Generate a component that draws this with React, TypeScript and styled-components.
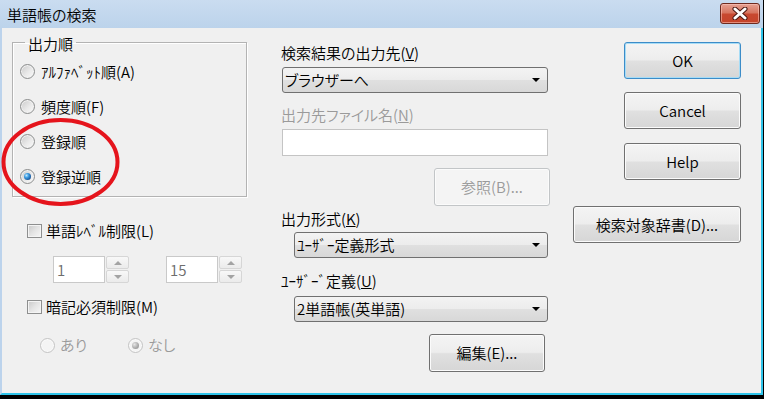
import React from "react";
import styled, { createGlobalStyle } from "styled-components";

const Global = createGlobalStyle`
  html, body { margin: 0; padding: 0; background: #000; }
  body {
    font-family: "Noto Sans CJK JP DemiLight", "Noto Sans CJK JP", "Noto Sans", sans-serif;
    font-weight: 300;
    font-size: 15px;
    font-feature-settings: "palt";
    color: #000;
  }
  * { box-sizing: border-box; }
`;

const Screen = styled.div`
  position: relative;
  width: 764px;
  height: 399px;
  background: #000;
  overflow: hidden;
`;

const Window = styled.div`
  width: 763px;
  height: 395px;
  display: flex;
  flex-direction: column;
`;

const TitleBar = styled.div`
  height: 28px;
  flex: none;
  display: flex;
  align-items: flex-start;
  justify-content: space-between;
  padding: 0 3px 0 7px;
  background: linear-gradient(#cadcf0, #bcd3eb);
`;

const Title = styled.div`
  margin-top: 5px;
  line-height: 20px;
`;

const CloseButton = styled.div`
  margin-top: 3px;
  width: 40px;
  height: 21px;
  border: 1px solid #6e2a1f;
  border-radius: 3px;
  background: linear-gradient(#e6a193 0%, #d77660 45%, #c8482f 55%, #c4442b 100%);
  box-shadow: inset 0 0 0 1px rgba(255, 200, 190, 0.55);
  display: flex;
  align-items: center;
  justify-content: center;
`;

const Body = styled.div`
  flex: 1;
  display: flex;
  background: #f0f0f0;
  border-left: 2px solid #bcd3ec;
  border-right: 2px solid #2fc4ea;
  border-bottom: 2px solid #2fc4ea;
  padding: 4px 0 0 10px;
`;

const LeftCol = styled.div`
  width: 235px;
  display: flex;
  flex-direction: column;
`;

const MiddleCol = styled.div`
  width: 269px;
  margin-left: 34px;
  display: flex;
  flex-direction: column;
`;

const RightCol = styled.div`
  width: 168px;
  margin-left: 23px;
  display: flex;
  flex-direction: column;
`;

const Group = styled.fieldset`
  margin: 0;
  padding: 2px 0 2px 7px;
  border: 1px solid #b3b3b3;
  box-shadow: 1px 1px 0 #fff, inset 1px 1px 0 #fff;
  min-inline-size: 0;
  width: 235px;
`;

const Legend = styled.legend`
  margin-left: 5px;
  padding: 4px 3px 0;
  line-height: 16px;
`;

const RadioRow = styled.div<{ $h?: number }>`
  display: flex;
  align-items: center;
  height: ${(p) => p.$h ?? 35}px;
  gap: 6px;
  line-height: 20px;
`;

const RadioCircle = styled.span<{ $checked?: boolean; $disabled?: boolean }>`
  position: relative;
  flex: none;
  width: 15px;
  height: 15px;
  border-radius: 50%;
  border: 1px solid ${(p) => (p.$disabled ? "#c4c4c4" : "#8c8e8e")};
  background: ${(p) =>
    p.$disabled
      ? "#f4f4f4"
      : "linear-gradient(135deg, #c9c9c9 0%, #e9e9e9 55%, #fbfbfb 100%)"};
  box-shadow: inset 0 0 0 1px ${(p) => (p.$disabled ? "#fafafa" : "#f2f2f2")};
  &::after {
    content: "";
    display: ${(p) => (p.$checked ? "block" : "none")};
    position: absolute;
    left: 3px;
    top: 3px;
    width: 7px;
    height: 7px;
    border-radius: 50%;
    background: ${(p) =>
      p.$disabled
        ? "radial-gradient(circle at 35% 35%, #e6e6e6 0%, #a8a8a8 60%, #8a8a8a 100%)"
        : "radial-gradient(circle at 35% 35%, #bfe8ff 0%, #3c9be0 35%, #124a8f 80%, #0a2f63 100%)"};
  }
`;

const Text = styled.span<{ $disabled?: boolean }>`
  color: ${(p) => (p.$disabled ? "#9a9a9a" : "#000")};
  white-space: nowrap;
`;

const U = styled.span`
  text-decoration: underline;
`;

const CheckRow = styled.div<{ $mt: number }>`
  display: flex;
  align-items: center;
  height: 20px;
  margin-top: ${(p) => p.$mt}px;
  padding-left: 15px;
  gap: 4px;
  line-height: 20px;
`;

const CheckBox = styled.span`
  flex: none;
  width: 15px;
  height: 14px;
  border: 1px solid #8e8f8f;
  background: linear-gradient(135deg, #c8c8c8 0%, #e4e4e4 50%, #f6f6f6 100%);
  box-shadow: inset 0 0 0 1px #f4f4f4;
`;

const SpinRow = styled.div`
  display: flex;
  margin-top: 15px;
  padding-left: 41px;
`;

const SpinGroup = styled.div<{ $ml?: number }>`
  display: flex;
  gap: 1px;
  margin-left: ${(p) => p.$ml ?? 0}px;
`;

const SpinInput = styled.div`
  width: 52px;
  height: 27px;
  border: 1px solid #c9c9c9;
  background: #fff;
  color: #6d6d6d;
  padding-left: 3px;
  line-height: 25px;
`;

const SpinButtons = styled.div`
  width: 23px;
  display: flex;
  flex-direction: column;
  gap: 1px;
`;

const SpinBtn = styled.div`
  height: 13px;
  border: 1px solid #d6d6d6;
  border-radius: 2px;
  background: linear-gradient(#f8f8f8, #ebebeb);
  display: flex;
  align-items: center;
  justify-content: center;
`;

const Tri = styled.span<{ $dir: "up" | "down"; $color: string; $w: number; $h: number }>`
  width: 0;
  height: 0;
  border-left: ${(p) => p.$w / 2}px solid transparent;
  border-right: ${(p) => p.$w / 2}px solid transparent;
  ${(p) =>
    p.$dir === "up"
      ? `border-bottom: ${p.$h}px solid ${p.$color};`
      : `border-top: ${p.$h}px solid ${p.$color};`}
`;

const OptRow = styled.div`
  display: flex;
  align-items: center;
  height: 20px;
  margin-top: 18px;
  padding-left: 28px;
  line-height: 20px;
`;

const OptItem = styled.div<{ $w?: number }>`
  display: flex;
  align-items: center;
  gap: 5px;
  width: ${(p) => (p.$w ? `${p.$w}px` : "auto")};
`;

const Label = styled.div<{ $mt: number; $disabled?: boolean }>`
  height: 20px;
  line-height: 20px;
  margin-top: ${(p) => p.$mt}px;
  color: ${(p) => (p.$disabled ? "#9a9a9a" : "#000")};
  white-space: nowrap;
`;

const Select = styled.div<{ $mt: number; $ml: number; $w: number }>`
  margin-top: ${(p) => p.$mt}px;
  margin-left: ${(p) => p.$ml}px;
  width: ${(p) => p.$w}px;
  height: 26px;
  border: 1px solid #707070;
  border-radius: 3px;
  background: linear-gradient(#f3f3f3 0%, #ececec 50%, #e0e0e0 50%, #d8d8d8 100%);
  display: flex;
  align-items: center;
  justify-content: space-between;
  padding: 0 7px 0 2px;
  line-height: 20px;
  white-space: nowrap;
`;

const TextInput = styled.div`
  margin-top: 4px;
  margin-left: 1px;
  width: 266px;
  height: 27px;
  border: 1px solid #c4c4c4;
  background: #fff;
`;

const Button = styled.div<{
  $mt: number;
  $ml?: number;
  $w: number;
  $h?: number;
  $disabled?: boolean;
  $default?: boolean;
}>`
  margin-top: ${(p) => p.$mt}px;
  margin-left: ${(p) => p.$ml ?? 0}px;
  width: ${(p) => p.$w}px;
  height: ${(p) => p.$h ?? 37}px;
  border: 1px solid
    ${(p) => (p.$disabled ? "#c2c5c7" : p.$default ? "#3c8cc8" : "#707070")};
  border-radius: 3px;
  background: ${(p) =>
    p.$disabled
      ? "#f4f4f4"
      : "linear-gradient(#f4f4f4 0%, #ededed 48%, #e0e0e0 52%, #d6d6d6 100%)"};
  box-shadow: inset 0 0 0 1px
    ${(p) => (p.$disabled ? "#fbfbfb" : p.$default ? "#a6dcf6" : "#fbfbfb")};
  color: ${(p) => (p.$disabled ? "#9a9a9a" : "#000")};
  display: flex;
  align-items: center;
  justify-content: center;
  line-height: 20px;
  white-space: nowrap;
  flex: none;
`;

const Annotation = styled.svg`
  position: absolute;
  left: 0;
  top: 116px;
  width: 124px;
  height: 94px;
  pointer-events: none;
`;

function Radio({
  label,
  checked,
  disabled,
}: {
  label: React.ReactNode;
  checked?: boolean;
  disabled?: boolean;
}) {
  return (
    <RadioRow>
      <RadioCircle $checked={checked} $disabled={disabled} />
      <Text $disabled={disabled}>{label}</Text>
    </RadioRow>
  );
}

function Spin({ value, ml }: { value: string; ml?: number }) {
  return (
    <SpinGroup $ml={ml}>
      <SpinInput>{value}</SpinInput>
      <SpinButtons>
        <SpinBtn>
          <Tri $dir="up" $color="#a3a3a3" $w={8} $h={4} />
        </SpinBtn>
        <SpinBtn>
          <Tri $dir="down" $color="#a3a3a3" $w={8} $h={4} />
        </SpinBtn>
      </SpinButtons>
    </SpinGroup>
  );
}

function Dropdown({
  text,
  mt,
  ml,
  w,
}: {
  text: React.ReactNode;
  mt: number;
  ml: number;
  w: number;
}) {
  return (
    <Select $mt={mt} $ml={ml} $w={w}>
      <span>{text}</span>
      <Tri $dir="down" $color="#000" $w={8} $h={4} />
    </Select>
  );
}

export default function App() {
  return (
    <Screen>
      <Global />
      <Window>
        <TitleBar>
          <Title>単語帳の検索</Title>
          <CloseButton>
            <svg width="16" height="13" viewBox="0 0 16 13">
              <path
                d="M3 2 L13 11 M13 2 L3 11"
                stroke="#4a1710"
                strokeWidth="5"
                strokeLinecap="round"
                fill="none"
              />
              <path
                d="M3 2 L13 11 M13 2 L3 11"
                stroke="#ffffff"
                strokeWidth="3"
                strokeLinecap="round"
                fill="none"
              />
            </svg>
          </CloseButton>
        </TitleBar>
        <Body>
          <LeftCol>
            <Group>
              <Legend>出力順</Legend>
              <Radio label="ｱﾙﾌｧﾍﾞｯﾄ順(A)" />
              <Radio label="頻度順(F)" />
              <Radio label="登録順" />
              <Radio label="登録逆順" checked />
            </Group>
            <CheckRow $mt={24}>
              <CheckBox />
              <Text>単語ﾚﾍﾞﾙ制限(L)</Text>
            </CheckRow>
            <SpinRow>
              <Spin value="1" />
              <Spin value="15" ml={37} />
            </SpinRow>
            <CheckRow $mt={14}>
              <CheckBox />
              <Text>暗記必須制限(M)</Text>
            </CheckRow>
            <OptRow>
              <OptItem $w={88}>
                <RadioCircle $disabled />
                <Text $disabled>あり</Text>
              </OptItem>
              <OptItem>
                <RadioCircle $disabled $checked />
                <Text $disabled>なし</Text>
              </OptItem>
            </OptRow>
          </LeftCol>

          <MiddleCol>
            <Label $mt={11}>
              検索結果の出力先(<U>V</U>)
            </Label>
            <Dropdown text="ブラウザーへ" mt={4} ml={1} w={266} />
            <Label $mt={12} $disabled>
              出力先ファイル名(<U>N</U>)
            </Label>
            <TextInput />
            <Button $mt={12} $ml={153} $w={116} $h={38} $disabled>
              参照(B)...
            </Button>
            <Label $mt={3}>
              出力形式(<U>K</U>)
            </Label>
            <Dropdown text="ﾕｰｻﾞｰ定義形式" mt={3} ml={13} w={254} />
            <Label $mt={13}>
              ﾕｰｻﾞｰﾞ定義(<U>U</U>)
            </Label>
            <Dropdown text="2単語帳(英単語)" mt={5} ml={13} w={254} />
            <Button $mt={12} $ml={148} $w={116} $h={38}>
              編集(E)...
            </Button>
          </MiddleCol>

          <RightCol>
            <Button $mt={10} $ml={51} $w={117} $default>
              OK
            </Button>
            <Button $mt={13} $ml={51} $w={117}>
              Cancel
            </Button>
            <Button $mt={14} $ml={51} $w={117}>
              Help
            </Button>
            <Button $mt={26} $w={168}>
              検索対象辞書(D)...
            </Button>
          </RightCol>
        </Body>
      </Window>
      <Annotation viewBox="0 0 124 94">
        <ellipse
          cx="60.5"
          cy="46"
          rx="57"
          ry="42"
          fill="none"
          stroke="#e5141c"
          strokeWidth="4"
        />
      </Annotation>
    </Screen>
  );
}
